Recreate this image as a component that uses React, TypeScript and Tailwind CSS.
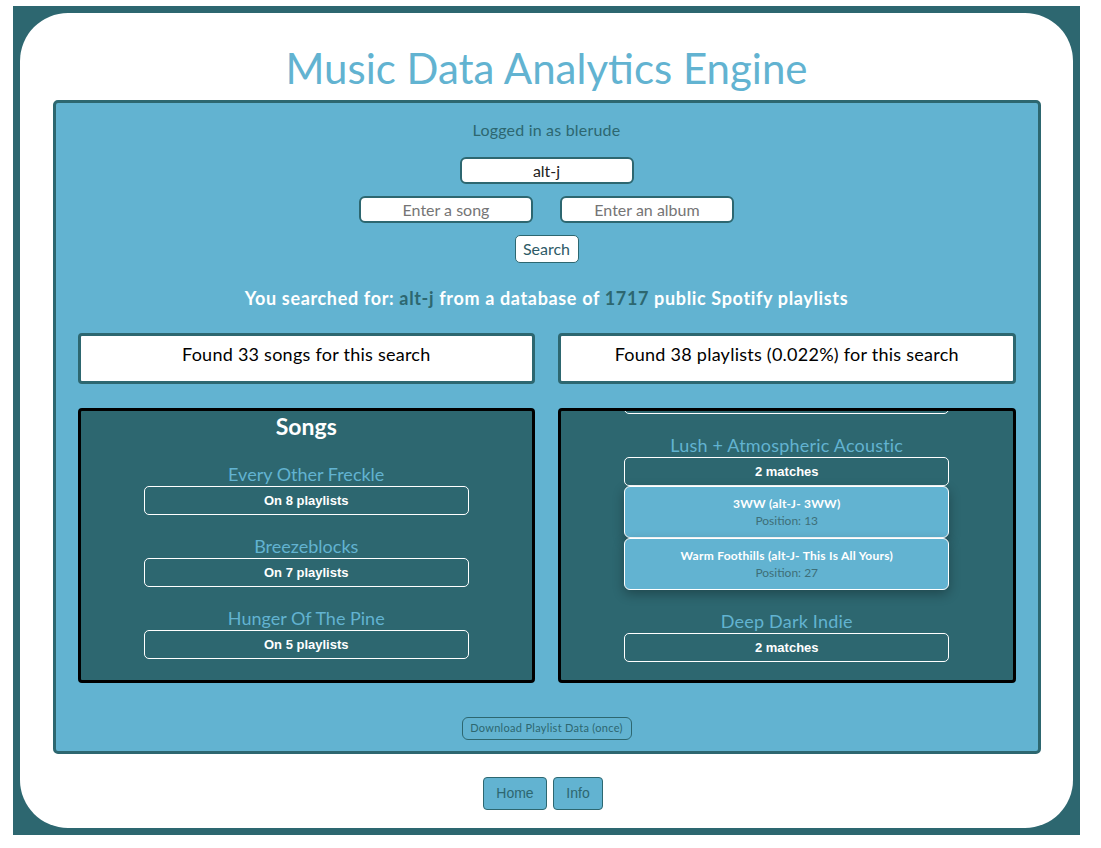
import { useLayoutEffect, useRef } from 'react';

const SONGS = [
  { title: 'Every Other Freckle', count: 8 },
  { title: 'Breezeblocks', count: 7 },
  { title: 'Hunger Of The Pine', count: 5 },
];

type Track = { name: string; pos: number };

const PLAYLISTS: { name: string; matches: number; tracks: Track[] }[] = [
  { name: 'Indie Chill Mix', matches: 3, tracks: [] },
  {
    name: 'Lush + Atmospheric Acoustic',
    matches: 2,
    tracks: [
      { name: '3WW (alt-J- 3WW)', pos: 13 },
      { name: 'Warm Foothills (alt-J- This Is All Yours)', pos: 27 },
    ],
  },
  { name: 'Deep Dark Indie', matches: 2, tracks: [] },
];

function CountBox({ children }: { children: React.ReactNode }) {
  return (
    <div className="w-[325px] h-[29px] mx-auto border border-white rounded-[5px] flex items-center justify-center text-white text-[13px] font-bold font-['Liberation_Sans',Arial,sans-serif]">
      {children}
    </div>
  );
}

export default function App() {
  const listRef = useRef<HTMLDivElement>(null);

  // playlist panel shows the end of the list
  useLayoutEffect(() => {
    if (listRef.current) listRef.current.scrollTop = listRef.current.scrollHeight;
  }, []);

  return (
    <div className="w-full h-[848px] bg-white pt-[6px] pl-[13px] font-['Lato',sans-serif]">
      <div className="w-[1067px] h-[829px] bg-[#2d6770] p-[7px]">
        <div className="h-full bg-white rounded-[48px] flex flex-col items-center pt-[31px]">
          <h1 className="text-[42px] leading-[48px] text-[#62b3d1]">Music Data Analytics Engine</h1>

          {/* Main panel */}
          <div className="mt-[8px] w-[988px] h-[654px] bg-[#62b3d1] border-[3px] border-[#2d6770] rounded-[5px] flex flex-col items-center pt-[15px]">
            <p className="text-[16px] leading-[24px] tracking-[0.2px] text-[#2d6770]">Logged in as blerude</p>

            <input
              defaultValue="alt-j"
              className="mt-[15px] w-[174px] h-[27px] bg-white border-2 border-[#2d6770] rounded-[6px] text-center text-[16px] text-[#222] outline-none"
            />
            <div className="mt-[12px] flex gap-[27px]">
              <input
                placeholder="Enter a song"
                className="w-[174px] h-[27px] bg-white border-2 border-[#2d6770] rounded-[6px] text-center text-[16px] placeholder:text-[#757575] outline-none"
              />
              <input
                placeholder="Enter an album"
                className="w-[174px] h-[27px] bg-white border-2 border-[#2d6770] rounded-[6px] text-center text-[16px] placeholder:text-[#757575] outline-none"
              />
            </div>
            <button className="mt-[12px] w-[64px] h-[28px] bg-white border border-[#2d6770] rounded-[5px] text-[16px] text-[#2d5a66]">
              Search
            </button>

            <p className="mt-[22px] text-[18px] leading-[27px] font-bold tracking-[0.65px] text-white">
              You searched for: <span className="text-[#2d6770]">alt-j</span> from a database of{' '}
              <span className="text-[#2d6770]">1717</span> public Spotify playlists
            </p>

            <div className="mt-[21px] w-full px-[22px] grid grid-cols-2 gap-[23px]">
              <div className="h-[51px] bg-white border-[3px] border-[#2d6770] rounded-[4px] flex justify-center pt-[6px] text-[18px] leading-[25px] tracking-[0.25px] text-black">
                Found 33 songs for this search
              </div>
              <div className="h-[51px] bg-white border-[3px] border-[#2d6770] rounded-[4px] flex justify-center pt-[6px] text-[18px] leading-[25px] tracking-[0.25px] text-black">
                Found 38 playlists (0.022%) for this search
              </div>
            </div>

            <div className="mt-[24px] w-full px-[22px] grid grid-cols-2 gap-[23px]">
              {/* Songs */}
              <div className="h-[275px] bg-[#2d6770] border-[3px] border-black rounded-[4px] overflow-hidden">
                <h2 className="text-center text-[23px] leading-[30px] font-bold text-white">Songs</h2>
                <div className="mt-[21px] flex flex-col gap-[19px]">
                  {SONGS.map((s) => (
                    <div key={s.title}>
                      <p className="text-center text-[18px] leading-[24px] text-[#62b3d1]">{s.title}</p>
                      <CountBox>On {s.count} playlists</CountBox>
                    </div>
                  ))}
                </div>
              </div>

              {/* Playlists */}
              <div
                ref={listRef}
                className="h-[275px] bg-[#2d6770] border-[3px] border-black rounded-[4px] overflow-hidden"
              >
                <div className="pt-[20px] pb-[18px] flex flex-col gap-[19px]">
                  {PLAYLISTS.map((p) => (
                    <div key={p.name}>
                      <p className="text-center text-[18px] leading-[24px] tracking-[0.2px] text-[#62b3d1]">{p.name}</p>
                      <CountBox>{p.matches} matches</CountBox>
                      {p.tracks.map((t) => (
                        <div
                          key={t.name}
                          className="w-[325px] h-[52px] mx-auto bg-[#62b3d1] border border-white rounded-[6px] shadow-[0_4px_12px_rgba(0,0,0,0.3)] flex flex-col items-center justify-center text-[12px] leading-[17px]"
                        >
                          <span className="font-bold tracking-[0.25px] text-white">{t.name}</span>
                          <span className="text-[#3e6f78]">Position: {t.pos}</span>
                        </div>
                      ))}
                    </div>
                  ))}
                </div>
              </div>
            </div>

            <button className="mt-[34px] w-[170px] h-[23px] border border-[#2d6770] rounded-[6px] text-[11px] tracking-[0.3px] text-[#2d6770]">
              Download Playlist Data (once)
            </button>
          </div>

          <div className="mt-[23px] mr-[7px] flex gap-[6px]">
            <button className="w-[64px] h-[33px] bg-[#62b3d1] border border-[#2d6770] rounded-[4px] text-[14px] text-[#2d6770] font-['Liberation_Sans',Arial,sans-serif]">
              Home
            </button>
            <button className="w-[50px] h-[33px] bg-[#62b3d1] border border-[#2d6770] rounded-[4px] text-[14px] text-[#2d6770] font-['Liberation_Sans',Arial,sans-serif]">
              Info
            </button>
          </div>
        </div>
      </div>
    </div>
  );
}
